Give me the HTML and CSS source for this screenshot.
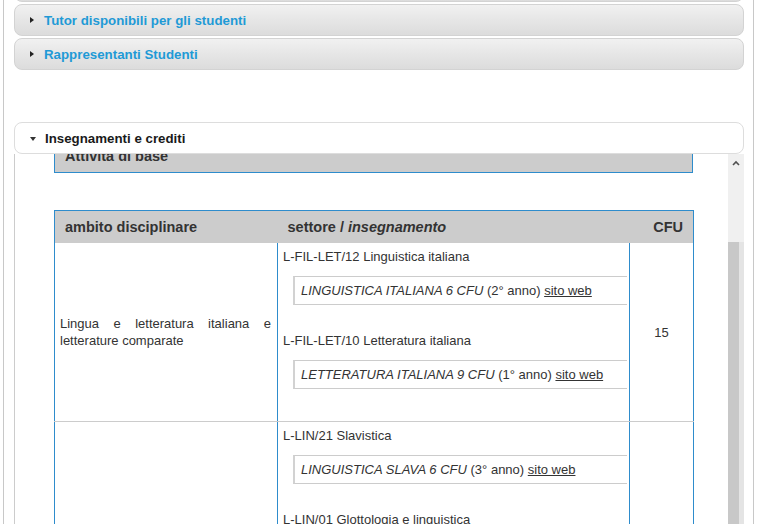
FILE: index.html
```html
<!DOCTYPE html>
<html lang="it">
<head>
<meta charset="utf-8">
<title>Insegnamenti e crediti</title>
<link rel="stylesheet" href="styles.css">
</head>
<body>
<div class="page">
  <div class="acc-head closed"><span class="tri-right"></span><span class="acc-title"></span></div>
  <div class="acc-head closed"><span class="tri-right"></span><span class="acc-title">Tutor disponibili per gli studenti</span></div>
  <div class="acc-head closed"><span class="tri-right"></span><span class="acc-title">Rappresentanti Studenti</span></div>
  <div class="acc-head open"><span class="tri-down"></span><span class="acc-title">Insegnamenti e crediti</span></div>
  <div class="acc-panel">
    <div class="panel-view">
      <div class="panel-inner">
        <div class="block-bar">Attività di base</div>
        <table class="plan">
          <colgroup><col class="c1"><col class="c2"><col class="c3"></colgroup>
          <thead>
            <tr><th class="th-ambito">ambito disciplinare</th><th class="th-settore">settore / <i>insegnamento</i></th><th class="th-cfu">CFU</th></tr>
          </thead>
          <tbody>
            <tr>
              <td class="ambito">Lingua e letteratura italiana e letterature comparate</td>
              <td class="settore">
                <div class="ssd">L-FIL-LET/12 Linguistica italiana</div>
                <div class="course"><i>LINGUISTICA ITALIANA 6 CFU</i> (2° anno) <a href="#">sito web</a></div>
                <div class="ssd">L-FIL-LET/10 Letteratura italiana</div>
                <div class="course"><i>LETTERATURA ITALIANA 9 CFU</i> (1° anno) <a href="#">sito web</a></div>
              </td>
              <td class="cfu">15</td>
            </tr>
            <tr>
              <td class="ambito"></td>
              <td class="settore">
                <div class="ssd">L-LIN/21 Slavistica</div>
                <div class="course"><i>LINGUISTICA SLAVA 6 CFU</i> (3° anno) <a href="#">sito web</a></div>
                <div class="ssd">L-LIN/01 Glottologia e linguistica</div>
              </td>
              <td class="cfu"></td>
            </tr>
          </tbody>
        </table>
      </div>
    </div>
    <div class="vscroll">
      <div class="vscroll-up"><svg width="8" height="6" viewBox="0 0 8 6"><path d="M1 5 L4 2 L7 5" fill="none" stroke="#505050" stroke-width="1.6"/></svg></div>
      <div class="vscroll-thumb"></div>
    </div>
  </div>
</div>
</body>
</html>
```
FILE: styles.css
```css
html, body {
  margin: 0;
  padding: 0;
  background: #ffffff;
  overflow: hidden;
}
body {
  font-family: "Liberation Sans", Arial, sans-serif;
  font-size: 13px;
  color: #333333;
}
.page {
  margin: -30px 0 0 3px;
  width: 730px;
  height: 600px;
  border-left: 1px solid #c8c8c8;
  border-right: 1px solid #c8c8c8;
  padding: 0 9px 0 10px;
  box-sizing: content-box;
}
.acc-head {
  height: 32px;
  box-sizing: border-box;
  border: 1px solid #d3d3d3;
  border-radius: 8px;
  display: flex;
  align-items: center;
  padding-left: 15px;
  margin-top: 2px;
}
.acc-head:first-child {
  margin-top: 0;
}
.acc-head.closed {
  background: linear-gradient(to bottom, #f1f1f1 0%, #e6e6e6 50%, #dcdcdc 100%);
}
.acc-head.open {
  margin-top: 52px;
  background: #ffffff;
  border-color: #dddddd;
}
.acc-title {
  font-size: 13.3px;
  font-weight: bold;
  margin-left: 10px;
}
.closed .acc-title {
  color: #1f9ad6;
}
.open .acc-title {
  color: #1a1a1a;
  margin-left: 9px;
}
.tri-right {
  width: 0;
  height: 0;
  border-left: 4px solid #222222;
  border-top: 3.5px solid transparent;
  border-bottom: 3.5px solid transparent;
}
.tri-down {
  width: 0;
  height: 0;
  border-top: 4px solid #333333;
  border-left: 3px solid transparent;
  border-right: 3px solid transparent;
  margin-top: 2px;
}
.acc-panel {
  display: flex;
  height: 380px;
  border-left: 1px solid #cccccc;
}
.panel-view {
  flex: 1;
  overflow: hidden;
}
.panel-inner {
  margin-top: -13px;
  padding-left: 39px;
}
.block-bar {
  width: 639px;
  box-sizing: border-box;
  background: #cccccc;
  border: 1px solid #2e8ccc;
  border-top: none;
  padding: 6px 10px 7px;
  line-height: 18px;
  font-size: 14.5px;
  font-weight: bold;
  color: #333333;
}
.plan {
  margin-top: 37px;
  width: 639px;
  table-layout: fixed;
  border-collapse: collapse;
  border: 1px solid #2e8ccc;
}
.c1 { width: 223px; }
.c2 { width: 352px; }
.c3 { width: 64px; }
.plan th {
  background: #cccccc;
  height: 32px;
  padding: 0 10px;
  font-size: 14.5px;
  font-weight: bold;
  color: #333333;
  text-align: left;
  vertical-align: middle;
}
.plan th.th-cfu {
  text-align: right;
}
.plan td {
  border-left: 1px solid #2e8ccc;
  border-right: 1px solid #2e8ccc;
  border-bottom: 1px solid #cccccc;
  vertical-align: middle;
}
.ambito {
  padding: 0 6px 0 5px;
  text-align: justify;
  line-height: 17px;
}
.settore {
  padding: 5px 2px 5px 5px;
  vertical-align: top;
}
.ssd {
  line-height: 18px;
}
.course {
  margin: 10px 0 27px 10px;
  border-top: 1px solid #cccccc;
  border-bottom: 1px solid #cccccc;
  border-left: 2px solid #d2d2d2;
  padding: 5px 6px;
  line-height: 17px;
}
.course a {
  color: #333333;
  text-decoration: underline;
}
.cfu {
  text-align: center;
}
.vscroll {
  width: 16px;
  background: #f0f0f0;
  display: flex;
  flex-direction: column;
}
.vscroll-up {
  height: 17px;
  display: flex;
  justify-content: center;
  align-items: center;
}
.vscroll-thumb {
  margin-top: 71px;
  flex: 1;
  background: linear-gradient(to right, #c8c8c8 0, #c8c8c8 11px, #e4e4e4 11px, #e4e4e4 100%);
}
```
